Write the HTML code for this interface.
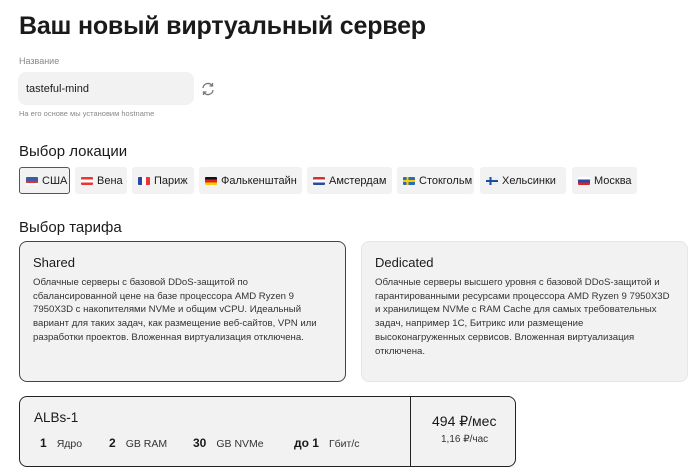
<!DOCTYPE html>
<html><head><meta charset="utf-8"><style>
*{margin:0;padding:0;box-sizing:border-box}
body{width:700px;height:472px;background:#fff;font-family:"Liberation Sans",sans-serif;color:#1a1a1a;position:relative;overflow:hidden}
.a{position:absolute;white-space:nowrap}
h1{position:absolute;left:19px;top:12px;font-size:25px;font-weight:bold;letter-spacing:-0.2px}
.chip{position:absolute;top:167px;height:27px;background:#f2f2f2;border-radius:3px;font-size:11px;display:flex;align-items:center;padding-left:6px;gap:4px}
.flag{width:12px;height:8px;display:inline-block;border-radius:1px}
.card{position:absolute;top:241px;height:141px;width:327px;background:#f2f2f2;border-radius:8px;padding:13px 20px 13px 13px}
.card b{display:block;font-size:13px;font-weight:normal;margin-bottom:6px}
.card p{font-size:9.6px;line-height:13.7px;color:#333;white-space:normal}
</style></head><body>
<h1>Ваш новый виртуальный сервер</h1>
<div class="a" style="left:19px;top:56px;font-size:9px;color:#888">Название</div>
<div class="a" style="left:18px;top:72px;width:176px;height:33px;background:#f2f2f2;border-radius:8px;font-size:11px;padding:11px 8px">tasteful-mind</div>
<svg class="a" style="left:200px;top:81px" width="16" height="16" viewBox="0 0 16 16" fill="none" stroke="#777" stroke-width="1.3"><path d="M3 7a5 5 0 0 1 9-2.5M13 9a5 5 0 0 1-9 2.5"/><path d="M12.5 2v3h-3M3.5 14v-3h3"/></svg>
<div class="a" style="left:19px;top:109px;font-size:7.5px;color:#888">На его основе мы установим hostname</div>
<div class="a" style="left:19px;top:143px;font-size:15px">Выбор локации</div>
<div class="chip" style="left:19px;width:51px;border:1.5px solid #555;background:#f2f2f2"><span class="flag" style="background:linear-gradient(#3c5aa6 0 50%,transparent 50%),repeating-linear-gradient(#d33 0 2px,#fff 2px 4px)"></span>США</div>
<div class="chip" style="left:75px;width:52px"><span class="flag" style="background:linear-gradient(#e33 0 33%,#fff 33% 66%,#e33 66%)"></span>Вена</div>
<div class="chip" style="left:132px;width:62px"><span class="flag" style="background:linear-gradient(90deg,#2547a8 0 33%,#fff 33% 66%,#e33 66%)"></span>Париж</div>
<div class="chip" style="left:199px;width:103px"><span class="flag" style="background:linear-gradient(#111 0 33%,#d22 33% 66%,#fc0 66%)"></span>Фалькенштайн</div>
<div class="chip" style="left:307px;width:85px"><span class="flag" style="background:linear-gradient(#c33 0 33%,#fff 33% 66%,#2a4d9b 66%)"></span>Амстердам</div>
<div class="chip" style="left:397px;width:77px"><span class="flag" style="background:linear-gradient(90deg,transparent 30%,#fc0 30% 45%,transparent 45%),linear-gradient(#2a6bb5 0 40%,#fc0 40% 60%,#2a6bb5 60%)"></span>Стокгольм</div>
<div class="chip" style="left:480px;width:86px"><span class="flag" style="background:linear-gradient(90deg,transparent 30%,#1a4fa0 30% 45%,transparent 45%),linear-gradient(#eee 0 40%,#1a4fa0 40% 60%,#eee 60%)"></span>Хельсинки</div>
<div class="chip" style="left:572px;width:65px"><span class="flag" style="background:linear-gradient(#fff 0 33%,#2547a8 33% 66%,#d22 66%)"></span>Москва</div>
<div class="a" style="left:19px;top:219px;font-size:15px">Выбор тарифа</div>
<div class="card" style="left:19px;border:1.3px solid #444"><b>Shared</b><p>Облачные серверы с базовой DDoS-защитой по сбалансированной цене на базе процессора AMD Ryzen 9 7950X3D с накопителями NVMe и общим vCPU. Идеальный вариант для таких задач, как размещение веб-сайтов, VPN или разработки проектов. Вложенная виртуализация отключена.</p></div>
<div class="card" style="left:361px;border:1px solid #e6e6e6;padding-right:12px"><b>Dedicated</b><p>Облачные серверы высшего уровня с базовой DDoS-защитой и гарантированными ресурсами процессора AMD Ryzen 9 7950X3D и хранилищем NVMe с RAM Cache для самых требовательных задач, например 1С, Битрикс или размещение высоконагруженных сервисов. Вложенная виртуализация отключена.</p></div>
<div class="a" style="left:19px;top:396px;width:497px;height:71px;background:#f2f2f2;border:1.5px solid #222;border-radius:8px"></div>
<div class="a" style="left:410px;top:397px;width:1px;height:69px;background:#222"></div>
<div class="a" style="left:34px;top:410px;font-size:13.5px">ALBs-1</div>
<div class="a" style="left:40px;top:436px;font-size:12px"><b>1</b>&nbsp;&nbsp;&nbsp;<span style="font-size:10.5px;color:#333">Ядро</span></div>
<div class="a" style="left:109px;top:436px;font-size:12px"><b>2</b>&nbsp;&nbsp;&nbsp;<span style="font-size:10.5px;color:#333">GB RAM</span></div>
<div class="a" style="left:193px;top:436px;font-size:12px"><b>30</b>&nbsp;&nbsp;&nbsp;<span style="font-size:10.5px;color:#333">GB NVMe</span></div>
<div class="a" style="left:294px;top:436px;font-size:12px"><b>до 1</b>&nbsp;&nbsp;&nbsp;<span style="font-size:10.5px;color:#333">Гбит/с</span></div>
<div class="a" style="left:432px;top:413px;font-size:14px">494 ₽/мес</div>
<div class="a" style="left:441px;top:434px;font-size:10px;color:#333">1,16 ₽/час</div>
</body></html>
